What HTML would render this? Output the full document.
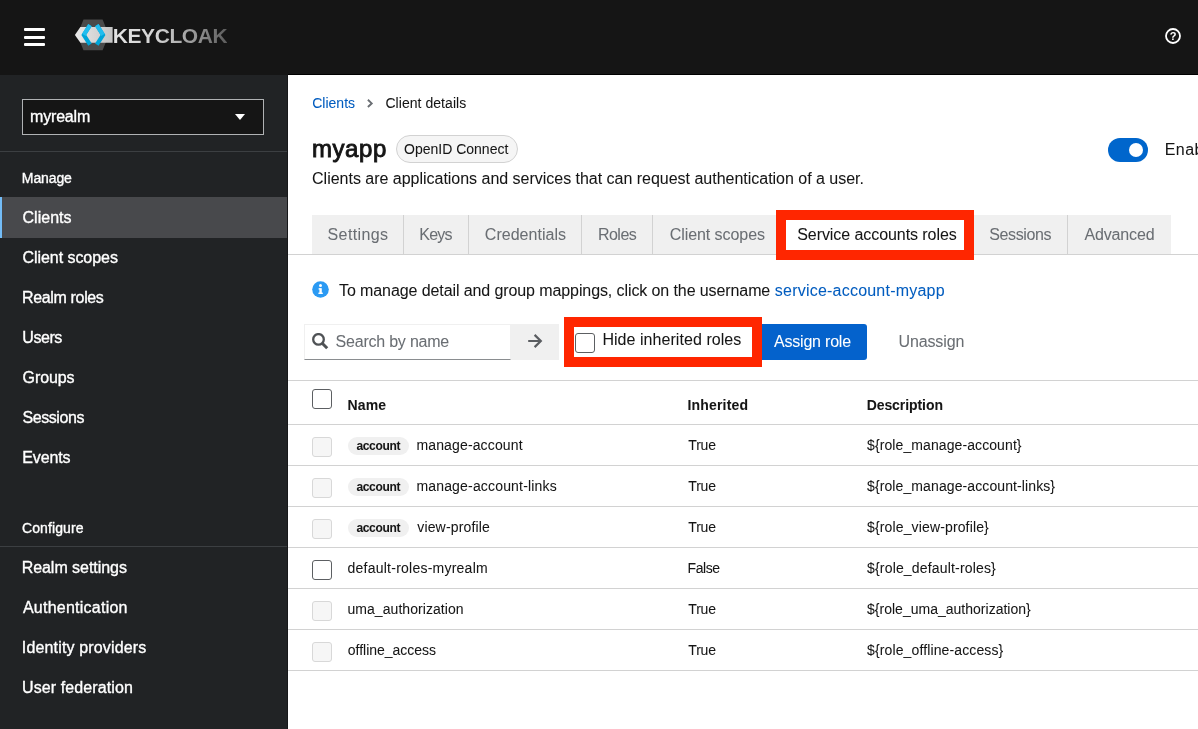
<!DOCTYPE html>
<html lang="en">
<head>
<meta charset="utf-8">
<title>Keycloak Administration Console</title>
<style>
html,body{margin:0;padding:0}
body{width:1198px;height:729px;overflow:hidden;background:#fff}
#app{width:1198px;height:729px;overflow:hidden;position:relative;background:#fff;font-family:"Liberation Sans",sans-serif;will-change:transform}
.a{position:absolute}
.t{position:absolute;white-space:nowrap;-webkit-text-stroke:0.05px currentColor}
#h1{-webkit-text-stroke:0.9px currentColor}
#hdr{left:0;top:0;width:1198px;height:75px;background:#151515}
#side{left:0;top:75px;width:287px;height:654px;background:#212325;border-right:1px solid #17181a}
.bar{left:24px;width:21px;height:3px;background:#fff;border-radius:1px}
#realm{left:22px;top:99px;width:240px;height:34px;border:1px solid #b0b2b4;background:#151515}
#caret{left:234.5px;top:114px;width:0;height:0;border-left:5px solid transparent;border-right:5px solid transparent;border-top:6px solid #fff}
.sdiv{left:0;width:287px;height:1px;background:#3c3f42}
#cur{left:0;top:197px;width:287px;height:41px;background:#48494c}
#curb{left:0;top:197px;width:2px;height:41px;background:#73bcf7}
#pill{left:396px;top:135px;width:120px;height:26px;border:1px solid #d2d2d2;border-radius:14px;background:#f5f5f5}
#tog{left:1108px;top:138px;width:40px;height:24px;border-radius:12px;background:#06c}
#knob{left:1129px;top:143px;width:14px;height:14px;border-radius:50%;background:#fff}
#tabs{left:312px;top:215px;width:859px;height:39px;background:#f0f0f0}
.tsep{top:215px;width:1px;height:39px;background:#d2d2d2}
#tabline{left:288px;top:254px;width:910px;height:1px;background:#d2d2d2}
#red1{left:776px;top:210px;width:178px;height:30px;border:10px solid #ff2600;background:#fff}
#red2{left:564px;top:317px;width:178px;height:30px;border:10px solid #ff2600;background:#fff}
#sin{left:304px;top:324px;width:205px;height:34px;border:1px solid #f0f0f0;border-bottom-color:#8a8d90;background:#fff}
#sbtn{left:511px;top:324px;width:48px;height:36px;background:#f0f0f0}
#abtn{left:758px;top:324px;width:109px;height:36px;background:#0462cc;border-radius:3px}
.cb{width:18px;height:18px;border:1px solid #5c5f62;border-radius:3px;background:#fff}
.cbd{width:18px;height:18px;border:1px solid #d8d8d8;border-radius:3px;background:#f6f6f6}
.hl{left:288px;width:910px;height:1px;background:#d2d2d2}
.lb{left:348px;width:61px;height:18px;border-radius:9px;background:#f0f0f0}
#logo_t{background:linear-gradient(90deg,#e4e4e4 0%,#d2d2d2 40%,#9a9a9a 70%,#5c5c5c 100%);-webkit-background-clip:text;background-clip:text;-webkit-text-fill-color:transparent;-webkit-text-stroke:0}
#logo_t{left:112.80px;top:19.50px;font-size:21px;line-height:32px;font-weight:700;color:transparent;letter-spacing:-0.440px;}
#t_realm{left:30.09px;top:104.50px;font-size:16px;line-height:24px;color:#fff;letter-spacing:-0.192px;-webkit-text-stroke:0.35px #fff;}
#t_manage{left:21.83px;top:167.50px;font-size:14px;line-height:21px;color:#fff;letter-spacing:-0.104px;-webkit-text-stroke:0.35px #fff;}
#n1{left:22.56px;top:205.50px;font-size:16px;line-height:24px;color:#fff;letter-spacing:0.016px;-webkit-text-stroke:0.35px #fff;}
#n2{left:22.56px;top:245.50px;font-size:16px;line-height:24px;color:#fff;letter-spacing:-0.059px;-webkit-text-stroke:0.35px #fff;}
#n3{left:22.09px;top:285.50px;font-size:16px;line-height:24px;color:#fff;letter-spacing:-0.357px;-webkit-text-stroke:0.35px #fff;}
#n4{left:22.27px;top:325.50px;font-size:16px;line-height:24px;color:#fff;letter-spacing:-0.433px;-webkit-text-stroke:0.35px #fff;}
#n5{left:22.54px;top:365.50px;font-size:16px;line-height:24px;color:#fff;letter-spacing:-0.083px;-webkit-text-stroke:0.35px #fff;}
#n6{left:22.47px;top:405.50px;font-size:16px;line-height:24px;color:#fff;letter-spacing:-0.419px;-webkit-text-stroke:0.35px #fff;}
#n7{left:22.36px;top:445.50px;font-size:16px;line-height:24px;color:#fff;letter-spacing:-0.173px;-webkit-text-stroke:0.35px #fff;}
#t_conf{left:21.96px;top:517.50px;font-size:14px;line-height:21px;color:#fff;letter-spacing:0.109px;-webkit-text-stroke:0.35px #fff;}
#n8{left:21.63px;top:555.50px;font-size:16px;line-height:24px;color:#fff;letter-spacing:-0.039px;-webkit-text-stroke:0.35px #fff;}
#n9{left:22.89px;top:595.50px;font-size:16px;line-height:24px;color:#fff;letter-spacing:0.248px;-webkit-text-stroke:0.35px #fff;}
#n10{left:21.85px;top:635.50px;font-size:16px;line-height:24px;color:#fff;letter-spacing:0.152px;-webkit-text-stroke:0.35px #fff;}
#n11{left:22.05px;top:675.50px;font-size:16px;line-height:24px;color:#fff;letter-spacing:0.103px;-webkit-text-stroke:0.35px #fff;}
#bc1{left:312.19px;top:92.50px;font-size:14px;line-height:21px;color:#005cbf;letter-spacing:0.015px;}
#bc2{left:385.42px;top:92.50px;font-size:14px;line-height:21px;color:#151515;letter-spacing:0.049px;}
#h1{left:311.93px;top:130.50px;font-size:24px;line-height:36px;color:#151515;letter-spacing:0.585px;}
#lab{left:404.04px;top:138.50px;font-size:14px;line-height:21px;color:#151515;letter-spacing:-0.001px;}
#desc{left:312.09px;top:166.50px;font-size:16px;line-height:24px;color:#151515;letter-spacing:-0.017px;}
#enab{left:1164.80px;top:137.50px;font-size:16px;line-height:24px;color:#151515;letter-spacing:0.400px;}
#tb1{left:327.57px;top:222.50px;font-size:16px;line-height:24px;color:#6a6e73;letter-spacing:0.374px;}
#tb2{left:419.34px;top:222.50px;font-size:16px;line-height:24px;color:#6a6e73;letter-spacing:-0.781px;}
#tb3{left:484.83px;top:222.50px;font-size:16px;line-height:24px;color:#6a6e73;letter-spacing:0.025px;}
#tb4{left:597.94px;top:222.50px;font-size:16px;line-height:24px;color:#6a6e73;letter-spacing:-0.514px;}
#tb5{left:669.66px;top:222.50px;font-size:16px;line-height:24px;color:#6a6e73;letter-spacing:-0.059px;}
#tb6{left:797.23px;top:222.50px;font-size:16px;line-height:24px;color:#151515;letter-spacing:-0.070px;}
#tb7{left:989.23px;top:222.50px;font-size:16px;line-height:24px;color:#6a6e73;letter-spacing:-0.378px;}
#tb8{left:1084.44px;top:222.50px;font-size:16px;line-height:24px;color:#6a6e73;letter-spacing:-0.152px;}
#inf1{left:339.04px;top:278.50px;font-size:16px;line-height:24px;color:#151515;letter-spacing:-0.096px;}
#inf2{left:774.80px;top:278.50px;font-size:16px;line-height:24px;color:#005cbf;letter-spacing:0.221px;}
#srch{left:335.58px;top:329.50px;font-size:16px;line-height:24px;color:#6a6e73;letter-spacing:-0.218px;}
#hide{left:602.39px;top:327.50px;font-size:16px;line-height:24px;color:#151515;letter-spacing:0.056px;}
#asg{left:773.96px;top:329.50px;font-size:16px;line-height:24px;color:#fff;letter-spacing:-0.200px;}
#unas{left:898.58px;top:329.50px;font-size:16px;line-height:24px;color:#6a6e73;letter-spacing:-0.140px;}
#th1{left:347.57px;top:394.50px;font-size:14px;line-height:21px;font-weight:700;color:#151515;letter-spacing:0.142px;}
#th2{left:687.55px;top:394.50px;font-size:14px;line-height:21px;font-weight:700;color:#151515;letter-spacing:0.167px;}
#th3{left:866.64px;top:394.50px;font-size:14px;line-height:21px;font-weight:700;color:#151515;letter-spacing:-0.068px;}
#r0l{left:356.44px;top:437.00px;font-size:12px;line-height:18px;font-weight:700;color:#151515;letter-spacing:-0.336px;}
#r0n{left:416.41px;top:434.50px;font-size:14px;line-height:21px;color:#151515;letter-spacing:0.147px;}
#r0i{left:688.36px;top:434.50px;font-size:14px;line-height:21px;color:#151515;letter-spacing:-0.237px;}
#r0d{left:867.04px;top:434.50px;font-size:14px;line-height:21px;color:#151515;letter-spacing:0.093px;}
#r1l{left:356.44px;top:478.00px;font-size:12px;line-height:18px;font-weight:700;color:#151515;letter-spacing:-0.336px;}
#r1n{left:416.41px;top:475.50px;font-size:14px;line-height:21px;color:#151515;letter-spacing:0.174px;}
#r1i{left:688.36px;top:475.50px;font-size:14px;line-height:21px;color:#151515;letter-spacing:-0.237px;}
#r1d{left:867.04px;top:475.50px;font-size:14px;line-height:21px;color:#151515;letter-spacing:0.103px;}
#r2l{left:356.44px;top:519.00px;font-size:12px;line-height:18px;font-weight:700;color:#151515;letter-spacing:-0.336px;}
#r2n{left:417.23px;top:516.50px;font-size:14px;line-height:21px;color:#151515;letter-spacing:0.165px;}
#r2i{left:688.36px;top:516.50px;font-size:14px;line-height:21px;color:#151515;letter-spacing:-0.237px;}
#r2d{left:867.04px;top:516.50px;font-size:14px;line-height:21px;color:#151515;letter-spacing:0.139px;}
#r3n{left:347.56px;top:557.50px;font-size:14px;line-height:21px;color:#151515;letter-spacing:0.236px;}
#r3i{left:687.53px;top:557.50px;font-size:14px;line-height:21px;color:#151515;letter-spacing:-0.422px;}
#r3d{left:867.04px;top:557.50px;font-size:14px;line-height:21px;color:#151515;letter-spacing:0.171px;}
#r4n{left:347.46px;top:598.50px;font-size:14px;line-height:21px;color:#151515;letter-spacing:0.058px;}
#r4i{left:688.36px;top:598.50px;font-size:14px;line-height:21px;color:#151515;letter-spacing:-0.237px;}
#r4d{left:867.04px;top:598.50px;font-size:14px;line-height:21px;color:#151515;letter-spacing:0.010px;}
#r5n{left:347.76px;top:639.50px;font-size:14px;line-height:21px;color:#151515;letter-spacing:-0.008px;}
#r5i{left:688.36px;top:639.50px;font-size:14px;line-height:21px;color:#151515;letter-spacing:-0.237px;}
#r5d{left:867.04px;top:639.50px;font-size:14px;line-height:21px;color:#151515;letter-spacing:0.125px;}
</style>
</head>
<body>
<div id="app">
<div class="a" id="hdr"></div>
<div class="a" id="side"></div>
<div class="a" style="left:288px;top:74px;width:910px;height:1px;background:#000"></div>
<div class="a bar" style="top:28px"></div>
<div class="a bar" style="top:35.5px"></div>
<div class="a bar" style="top:43px"></div>
<svg class="a" id="logo" style="left:70px;top:12px" width="170" height="48" viewBox="70 12 170 48">
<defs>
<linearGradient id="gb" x1="0" y1="0" x2="1" y2="0"><stop offset="0" stop-color="#eaeaea"/><stop offset="1" stop-color="#c4c4c4"/></linearGradient>
</defs>
<polygon points="83.5,19.5 102.6,19.5 108.8,34.9 102.6,50.3 83.5,50.3 77.3,34.9" fill="#4a4a4a"/>
<polygon points="80.4,27 112.6,27 112.6,42.8 80.4,42.8 74.9,34.9" fill="url(#gb)"/>
<polyline points="90,25.2 83.8,34.9 90,44.6" fill="none" stroke="#00a5d8" stroke-width="4.1"/><line x1="90" y1="25.2" x2="83.8" y2="34.9" stroke="#22bdee" stroke-width="4.1"/>
<polyline points="96.8,25.2 103,34.9 96.8,44.6" fill="none" stroke="#00a5d8" stroke-width="4.1"/><line x1="96.8" y1="25.2" x2="103" y2="34.9" stroke="#22bdee" stroke-width="4.1"/>

</svg>
<svg class="a" style="left:1165px;top:28px" width="16" height="16" viewBox="0 0 16 16"><circle cx="8" cy="8" r="7" fill="none" stroke="#fff" stroke-width="1.8"/><text x="8" y="12" text-anchor="middle" font-family="Liberation Sans, sans-serif" font-weight="700" font-size="11" fill="#fff">?</text></svg>
<div class="a" id="realm"></div>
<div class="a" id="caret"></div>
<div class="a sdiv" style="top:151px"></div>
<div class="a sdiv" style="top:546px"></div>
<div class="a" id="cur"></div>
<div class="a" id="curb"></div>
<svg class="a" style="left:366px;top:97.5px" width="8" height="11" viewBox="0 0 8 11"><polyline points="1.9,1.8 5.7,5.4 1.9,9" fill="none" stroke="#6a6e73" stroke-width="1.9"/></svg>
<div class="a" id="pill"></div>
<div class="a" id="tog"></div>
<div class="a" id="knob"></div>
<div class="a" id="tabs"></div>
<div class="a tsep" style="left:403px"></div>
<div class="a tsep" style="left:468px"></div>
<div class="a tsep" style="left:581px"></div>
<div class="a tsep" style="left:652px"></div>
<div class="a tsep" style="left:1067px"></div>
<div class="a" id="tabline"></div>
<div class="a" id="red1"></div>
<svg class="a" style="left:312.4px;top:280.5px" width="17" height="17" viewBox="0 0 17 17"><circle cx="8.5" cy="8.5" r="8.3" fill="#2b9af3"/><rect x="7.4" y="7.2" width="2.4" height="5.6" fill="#fff"/><rect x="6.6" y="7.2" width="2" height="1.4" fill="#fff"/><rect x="6.4" y="11.6" width="4.4" height="1.4" fill="#fff"/><circle cx="8.5" cy="4.6" r="1.5" fill="#fff"/></svg>
<div class="a" id="sin"></div>
<div class="a" id="sbtn"></div>
<svg class="a" style="left:312px;top:333px" width="17" height="17" viewBox="0 0 17 17"><circle cx="6.5" cy="6.4" r="5.3" fill="none" stroke="#4f5255" stroke-width="2.3"/><line x1="10.2" y1="10.2" x2="15.2" y2="15.2" stroke="#4f5255" stroke-width="3"/></svg>
<svg class="a" style="left:527px;top:333px" width="17" height="17" viewBox="527 333 17 17"><path d="M528.2 341H541M534.6 334.9L540.8 341L534.6 347.1" fill="none" stroke="#5a5d61" stroke-width="2.2"/></svg>
<div class="a" id="abtn"></div>
<div class="a" id="red2"></div>
<div class="a cb" style="left:575px;top:333px"></div>
<div class="a hl" style="top:380px"></div>
<div class="a hl" style="top:424px"></div>
<div class="a hl" style="top:465px"></div>
<div class="a hl" style="top:506px"></div>
<div class="a hl" style="top:547px"></div>
<div class="a hl" style="top:588px"></div>
<div class="a hl" style="top:629px"></div>
<div class="a hl" style="top:670px"></div>
<div class="a cb" style="left:312px;top:389px"></div>
<div class="a cbd" style="left:312px;top:437px"></div>
<div class="a cbd" style="left:312px;top:478px"></div>
<div class="a cbd" style="left:312px;top:519px"></div>
<div class="a cb" style="left:312px;top:560px"></div>
<div class="a cbd" style="left:312px;top:601px"></div>
<div class="a cbd" style="left:312px;top:642px"></div>
<div class="a lb" style="top:437px"></div>
<div class="a lb" style="top:478px"></div>
<div class="a lb" style="top:519px"></div>
<span class="t" id="logo_t">KEYCLOAK</span>
<span class="t" id="t_realm">myrealm</span>
<span class="t" id="t_manage">Manage</span>
<span class="t" id="n1">Clients</span>
<span class="t" id="n2">Client scopes</span>
<span class="t" id="n3">Realm roles</span>
<span class="t" id="n4">Users</span>
<span class="t" id="n5">Groups</span>
<span class="t" id="n6">Sessions</span>
<span class="t" id="n7">Events</span>
<span class="t" id="t_conf">Configure</span>
<span class="t" id="n8">Realm settings</span>
<span class="t" id="n9">Authentication</span>
<span class="t" id="n10">Identity providers</span>
<span class="t" id="n11">User federation</span>
<span class="t" id="bc1">Clients</span>
<span class="t" id="bc2">Client details</span>
<span class="t" id="h1">myapp</span>
<span class="t" id="lab">OpenID Connect</span>
<span class="t" id="desc">Clients are applications and services that can request authentication of a user.</span>
<span class="t" id="enab">Enabled</span>
<span class="t" id="tb1">Settings</span>
<span class="t" id="tb2">Keys</span>
<span class="t" id="tb3">Credentials</span>
<span class="t" id="tb4">Roles</span>
<span class="t" id="tb5">Client scopes</span>
<span class="t" id="tb6">Service accounts roles</span>
<span class="t" id="tb7">Sessions</span>
<span class="t" id="tb8">Advanced</span>
<span class="t" id="inf1">To manage detail and group mappings, click on the username</span>
<span class="t" id="inf2">service-account-myapp</span>
<span class="t" id="srch">Search by name</span>
<span class="t" id="hide">Hide inherited roles</span>
<span class="t" id="asg">Assign role</span>
<span class="t" id="unas">Unassign</span>
<span class="t" id="th1">Name</span>
<span class="t" id="th2">Inherited</span>
<span class="t" id="th3">Description</span>
<span class="t" id="r0l">account</span>
<span class="t" id="r0n">manage-account</span>
<span class="t" id="r0i">True</span>
<span class="t" id="r0d">${role_manage-account}</span>
<span class="t" id="r1l">account</span>
<span class="t" id="r1n">manage-account-links</span>
<span class="t" id="r1i">True</span>
<span class="t" id="r1d">${role_manage-account-links}</span>
<span class="t" id="r2l">account</span>
<span class="t" id="r2n">view-profile</span>
<span class="t" id="r2i">True</span>
<span class="t" id="r2d">${role_view-profile}</span>
<span class="t" id="r3n">default-roles-myrealm</span>
<span class="t" id="r3i">False</span>
<span class="t" id="r3d">${role_default-roles}</span>
<span class="t" id="r4n">uma_authorization</span>
<span class="t" id="r4i">True</span>
<span class="t" id="r4d">${role_uma_authorization}</span>
<span class="t" id="r5n">offline_access</span>
<span class="t" id="r5i">True</span>
<span class="t" id="r5d">${role_offline-access}</span>
</div>
</body>
</html>
